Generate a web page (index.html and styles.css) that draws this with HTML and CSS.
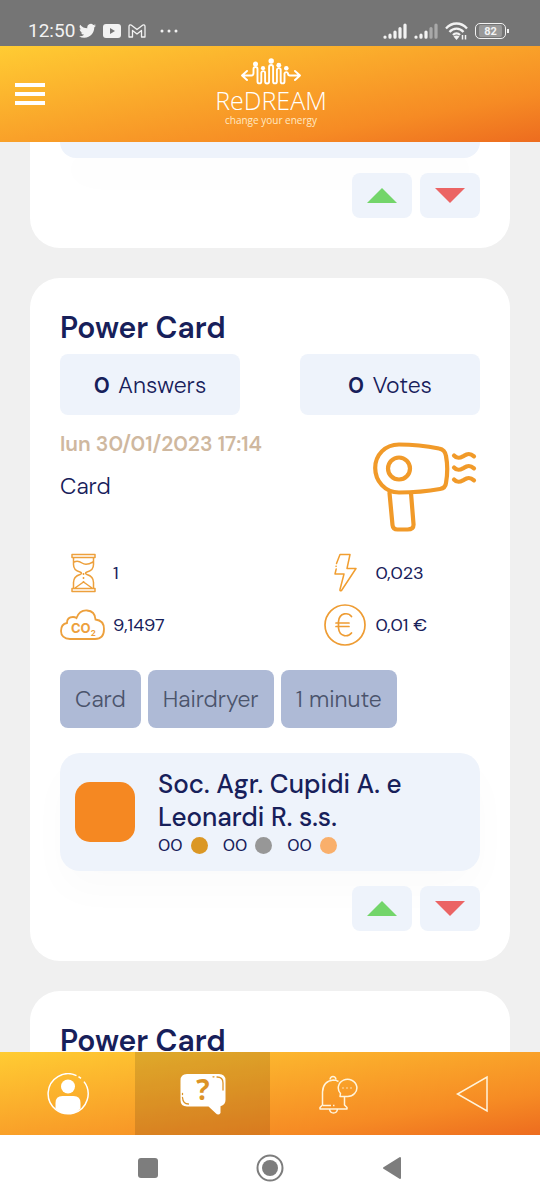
FILE: index.html
```html
<!DOCTYPE html>
<html lang="en">
<head>
<meta charset="utf-8">
<meta name="viewport" content="width=device-width, initial-scale=1">
<title>ReDREAM</title>
<link rel="stylesheet" href="styles.css">
</head>
<body>
<div class="screen">
  <div class="status">
    <span class="clock">12:50</span>
    <svg width="17" height="16" viewBox="0 0 24 20" fill="#f2f2f2"><path d="M24 2.4a10 10 0 0 1-2.8.8A5 5 0 0 0 23.300.5a10 10 0 0 1-3.100 1.200A4.900 4.900 0 0 0 11.800 6.200 14 14 0 0 1 1.700 1a4.900 4.900 0 0 0 1.500 6.600A4.900 4.900 0 0 1 1 7v.1a4.900 4.900 0 0 0 4 4.800 5 5 0 0 1-2.300.1 4.900 4.900 0 0 0 4.600 3.400A9.900 9.900 0 0 1 0 17.500 14 14 0 0 0 7.500 19.700c9.100 0 14.300-7.700 14-14.700A10 10 0 0 0 24 2.400z"/></svg>
    <svg width="18" height="14" viewBox="0 0 18 14"><rect width="18" height="14" rx="3" fill="#f2f2f2"/><path d="M7 4l5 3-5 3z" fill="#757575"/></svg>
    <svg width="18" height="14" viewBox="0 0 18 14" fill="none" stroke="#f2f2f2" stroke-width="1.300" stroke-linejoin="round"><path d="M1 13V2.500C1 .8 2.700.5 3.800 1.400L9 5.500l5.200-4.100C15.300.5 17 .8 17 2.500V13h-3.500V6.500L9 10 4.500 6.500V13z"/></svg>
    <svg class="more" width="18" height="4" viewBox="0 0 18 4" fill="#f2f2f2"><circle cx="2" cy="2" r="1.500"/><circle cx="9" cy="2" r="1.500"/><circle cx="16" cy="2" r="1.500"/></svg>
    <span class="spacer"></span>
    <svg width="24" height="16" viewBox="0 0 24 16" stroke="#f2f2f2" stroke-width="3.200" stroke-linecap="round"><path d="M2 14.200v-.2M7 14.200v-2M12 14.200V9M17 14.200V5.500M22 14.200V2"/></svg>
    <svg width="24" height="16" viewBox="0 0 24 16" stroke="#f2f2f2" stroke-width="3.200" stroke-linecap="round"><path d="M2 14.200v-.2M7 14.200v-2M12 14.200V9"/><path d="M17 14.200V5.500M22 14.200V2" stroke="#a9a9a9"/></svg>
    <svg width="23" height="18" viewBox="0 0 23 18" fill="none" stroke="#f2f2f2" stroke-width="2.300"><path d="M1 6.500C7-.2 16-.2 22 6.500M4.500 10C8.500 5.500 14.500 5.500 18.500 10M8 13c2-2.300 5-2.300 7 0"/><path d="M8.500 14.500L11.500 18l3-3.500c-1.500-1.500-4.500-1.500-6 0z" fill="#f2f2f2" stroke="none"/><path d="M17.500 17.500v-4.500M20.500 13v4.500" stroke-width="1.500"/></svg>
    <span class="battery">82</span>
  </div>

  <header class="topbar">
    <button class="menu" aria-label="Menu"><span></span><span></span><span></span></button>
    <div class="brand">
      <svg width="60" height="27" viewBox="0 0 60 27" fill="none" stroke="#fff" stroke-width="1.900" stroke-linecap="round" stroke-linejoin="round">
        <path d="M6 13L1 17.500 6 22M1 17.500H10.500Q12.500 17.500 12.500 15V11a2 2 0 0 1 4 0V23.500a1.900 1.900 0 0 0 3.800 0V15a1.900 1.900 0 0 1 3.800 0V23.500a2 2 0 0 0 4 0V9a2 2 0 0 1 4 0V23.500a1.900 1.900 0 0 0 3.800 0V12a1.900 1.900 0 0 1 3.800 0V23.500a1.900 1.900 0 0 0 3.800 0V15.500a1.800 1.800 0 0 1 3.500 0Q47 17.500 49 17.500H59M54 13l5 4.500L54 22"/>
        <g fill="#fff" stroke="none"><circle cx="14.500" cy="6" r="2.500"/><circle cx="22" cy="10.200" r="2.100"/><circle cx="30.200" cy="3" r="2.700"/><circle cx="37.800" cy="7.200" r="2.400"/><circle cx="45.300" cy="10.300" r="2.300"/></g>
      </svg>
      <span class="name">ReDREAM</span>
      <span class="tagline">change your energy</span>
    </div>
  </header>

  <main class="feed">
    <article class="card card-scrolled">
      <div class="profile-end"></div>
      <div class="ballot">
        <button class="vote" aria-label="Vote up"><svg width="30" height="15" viewBox="0 0 30 15"><path d="M0 15L15 0l15 15z" fill="#73d56a"/></svg></button>
        <button class="vote" aria-label="Vote down"><svg width="30" height="15" viewBox="0 0 30 15"><path d="M0 0h30L15 15z" fill="#eb6464"/></svg></button>
      </div>
    </article>

    <article class="card">
      <h2 class="title">Power Card</h2>
      <div class="counts">
        <button class="count"><b>0</b> Answers</button>
        <button class="count"><b>0</b> Votes</button>
      </div>
      <div class="summary">
        <div>
          <time class="date">lun 30/01/2023 17:14</time>
          <p class="kind">Card</p>
        </div>
        <svg class="dryer" width="104" height="90" viewBox="0 0 104 90" fill="none" stroke="#f19a29" stroke-width="4.200" stroke-linecap="round" stroke-linejoin="round">
          <path d="M26 2.500C12 2.500 2.200 13 2.200 26S12 50.500 26 50.500Q48 50.500 67 47Q72.500 46 73 41Q75.500 27 73 14Q72 7.500 66 6.500Q46 2.500 26 2.500z"/>
          <circle cx="26" cy="26.500" r="11"/>
          <path d="M16.500 51l3 32q.5 4.500 5 4.500h10q6.500 0 6-5.500L38 51"/>
          <path d="M81 13.500c4 4.500 7.500 1.500 10 .3 3.500-2.500 6-3 10 .5M81 25.500c4 4.500 7.500 1.500 10 .3 3.500-2.500 6-3 10 .5M81 37.500c4 4.500 7.500 1.500 10 .3 3.500-2.500 6-3 10 .5"/>
        </svg>
      </div>

      <div class="stats">
        <div class="stat">
          <svg width="45" height="42" viewBox="0 0 45 42" fill="none" stroke="#eda03c" stroke-width="1.500" stroke-linejoin="round">
            <path d="M12 2.500h23v3H12zM12 36.500h23v3H12zM13.500 5.500v7q0 6 6.500 7.500 3 1 0 2.500-6.500 2-6.500 8v6M33.500 5.500v7q0 6-6.500 7.500-3 1 0 2.500 6.500 2 6.500 8v6M14 10q4-2 8 1t11-1M15 36l8.500-6 8.500 6"/><path d="M23.500 21v9" stroke-dasharray="2 2"/>
          </svg><span>1</span>
        </div>
        <div class="stat">
          <svg width="45" height="42" viewBox="0 0 45 42" fill="none" stroke="#f19e30" stroke-width="1.500" stroke-linejoin="round" stroke-linecap="round">
            <path d="M13.500 11.500L17 2.500h10l-3 14h9L18.500 38.500q-2 1-1.500-1L21 22H12l1.200-5"/><path d="M13 14.200h.2"/>
          </svg><span>0,023</span>
        </div>
        <div class="stat">
          <svg width="45" height="42" viewBox="0 0 45 42" fill="none" stroke="#eda03c" stroke-width="1.800">
            <path d="M10 35C4 35 1 31.500 1 27q0-7 6-8 0-6 6-6 2 0 3.500 1 3-8 10.500-7.500 8 .5 8.500 9 8.500 1 8.500 9.500 0 10-9 10z"/>
            <text class="co" x="11" y="29">CO<tspan class="co-sub" dy="3">2</tspan></text>
          </svg><span>9,1497</span>
        </div>
        <div class="stat">
          <svg width="45" height="42" viewBox="0 0 45 42" fill="none" stroke="#ee9c33" stroke-width="1.700">
            <circle cx="22" cy="21" r="20"/><path d="M28.500 12.500C25.500 8.500 16.500 8 15.500 17.500v6.500c1 9.500 10 9 13 5M13 19h13M13 22.500h13" stroke-linecap="round"/>
          </svg><span>0,01 €</span>
        </div>
      </div>

      <div class="tags">
        <button class="tag">Card</button>
        <button class="tag">Hairdryer</button>
        <button class="tag">1 minute</button>
      </div>

      <section class="profile">
        <div class="avatar"></div>
        <div class="who">
          <h3 class="owner">Soc. Agr. Cupidi A. e Leonardi R. s.s.</h3>
          <div class="medals">
            <span class="medal gold">00</span>
            <span class="medal silver">00</span>
            <span class="medal bronze">00</span>
          </div>
        </div>
      </section>

      <div class="ballot">
        <button class="vote" aria-label="Vote up"><svg width="30" height="15" viewBox="0 0 30 15"><path d="M0 15L15 0l15 15z" fill="#73d56a"/></svg></button>
        <button class="vote" aria-label="Vote down"><svg width="30" height="15" viewBox="0 0 30 15"><path d="M0 0h30L15 15z" fill="#eb6464"/></svg></button>
      </div>
    </article>

    <article class="card">
      <h2 class="title">Power Card</h2>
    </article>
  </main>

  <nav class="tabs">
    <button class="tab" aria-label="Profile">
      <svg width="42" height="42" viewBox="0 0 42 42" fill="#fff"><path d="M29.500 2.600A20 20 0 1 0 37 8.600M31.500 3.600l2.500 1.800" fill="none" stroke="#fff" stroke-width="1.500"/><circle cx="21" cy="13.500" r="7"/><path d="M8.500 35.500V30q0-7 7-7h11q7 0 7 7v5.500Q28 41 21 41T8.500 35.500z"/></svg>
    </button>
    <button class="tab active" aria-label="Questions">
      <svg width="46" height="42" viewBox="0 0 46 42"><path d="M7 1h32q6.500 0 6.500 6.500V27q0 5-5 6.200V40q-2 3-5 0l-7-6.500H7Q.5 33.500.5 27V7.500Q.5 1 7 1z" fill="#fff"/><g fill="none" stroke="#dc9327" stroke-width="1.300" stroke-linecap="round"><path d="M37 4q6 0 6 6v7M33 3.800h1M2.500 24.500q.5 6.500 6 6.500M2.500 20.500v1"/></g><text class="mark" x="23" y="27">?</text></svg>
    </button>
    <button class="tab" aria-label="Notifications">
      <svg width="40" height="40" viewBox="0 0 40 40" fill="none" stroke="#fff4dc" stroke-width="1.500" stroke-linejoin="round"><path d="M20.500 7.500Q18 6 15.500 6 5 7 4.500 18v13L2 33.500V35h27v-1.500L26.500 31v-8M12 5.500q.5-3 3-3t3 3M11.500 35q.5 4 4 4t4-4M5 31.500h8M15 31.500h1.500"/><path d="M22.500 19.500A9.300 8.600 0 1 1 29 22.500H22z"/><path d="M24.500 14h1M28.500 14h1M32.500 14h1" stroke-width="1.500"/></svg>
    </button>
    <button class="tab" aria-label="Back">
      <svg width="36" height="38" viewBox="0 0 36 38" fill="none" stroke="#fff4dc" stroke-width="1.500"><path d="M32 2v34L2.500 19z"/></svg>
    </button>
  </nav>

  <div class="sysnav">
    <button class="key" aria-label="Recent apps"><svg width="20" height="20" viewBox="0 0 20 20"><rect width="20" height="20" rx="3" fill="#7d7d7d"/></svg></button>
    <button class="key" aria-label="Home"><svg width="28" height="28" viewBox="0 0 28 28"><circle cx="14" cy="14" r="12.500" fill="none" stroke="#7d7d7d" stroke-width="2"/><circle cx="14" cy="14" r="8" fill="#7d7d7d"/></svg></button>
    <button class="key" aria-label="System back"><svg width="20" height="24" viewBox="0 0 20 24"><path d="M18 2v20L2 12z" fill="#7d7d7d" stroke="#7d7d7d" stroke-width="2" stroke-linejoin="round"/></svg></button>
  </div>
</div>
</body>
</html>
```
FILE: styles.css
```css
* { box-sizing: border-box; }
body, h2, h3, p { margin: 0; }
body {
  font-family: "DM Sans", Inter, sans-serif;
  color: #17205a;
  background: #f0f0f0;
}
button {
  border: 0;
  padding: 0;
  background: none;
  font: inherit;
  color: inherit;
}
svg { display: block; flex: none; }

.screen {
  display: flex;
  flex-direction: column;
  height: 100vh;
}

.status {
  display: flex;
  align-items: center;
  gap: 7px;
  height: 46px;
  padding: 15px 34px 0 28px;
  background: #757575;
  color: #f2f2f2;
  flex: none;
}
.clock { font: 400 19px Roboto, sans-serif; margin-right: -3px; }
.more { margin-left: 7px; }
.spacer { flex: 1; }
.battery {
  position: relative;
  width: 31px;
  height: 16px;
  border: 1px solid #f2f2f2;
  border-radius: 5px;
  padding: 1px 3px;
  font: 700 11px/13px Roboto, sans-serif;
  text-align: center;
  background: #999 content-box;
}
.battery::after {
  content: "";
  position: absolute;
  right: -4px;
  top: 5px;
  width: 2px;
  height: 4px;
  background: #f2f2f2;
}

.topbar, .tabs { background: linear-gradient(to bottom right, #ffcc33, #f68b24 75%, #ed6c1f); }
.topbar {
  display: grid;
  grid-template-columns: 1fr auto 1fr;
  align-items: center;
  height: 96px;
  padding: 0 13px 0 15px;
  flex: none;
}
.menu {
  display: grid;
  gap: 5px;
  width: 30px;
}
.menu span { height: 4px; background: #fff; }
.brand {
  display: flex;
  flex-direction: column;
  align-items: center;
  color: #fff;
  padding-bottom: 6px;
}
.name { font: 300 25px/30px "Open Sans", sans-serif; }
.tagline { font: 400 10px/10px "Open Sans", sans-serif; color: #ffe9c4; }

.feed {
  flex: 1;
  min-height: 0;
  overflow: hidden;
  padding: 0 30px;
  display: flex;
  flex-direction: column;
  gap: 30px;
}
.card {
  flex: none;
  padding: 30px;
  border-radius: 30px;
  background: #fff;
}
.card-scrolled { padding-top: 0; border-radius: 0 0 30px 30px; }
.profile-end {
  height: 16px;
  border-radius: 0 0 20px 20px;
  background: #eef3fb;
  box-shadow: 0 20px 40px rgba(0, 0, 0, .02);
}
.title { font-size: 30px; line-height: 40px; font-weight: 600; }
.counts {
  display: flex;
  justify-content: space-between;
  gap: 60px;
  margin-top: 6px;
}
.count {
  flex: 1;
  height: 61px;
  border-radius: 8px;
  background: #eef3fb;
  font-size: 23px;
  font-weight: 300;
}
.count b { font-weight: 600; margin-right: 2px; }
.summary {
  display: flex;
  justify-content: space-between;
  padding: 14px 3px 0 0;
}
.date {
  display: block;
  font-size: 21px;
  line-height: 30px;
  font-weight: 600;
  color: #cfb89f;
}
.kind { font-size: 23px; line-height: 30px; font-weight: 300; margin-top: 12px; }
.dryer { margin-top: 13px; }

.stats {
  display: grid;
  grid-template-columns: 5fr 3fr;
  row-gap: 10px;
  margin-top: 20px;
}
.stat {
  display: flex;
  align-items: center;
  gap: 8px;
  font-size: 18px;
}
.co { font: 700 13px Inter, sans-serif; fill: #eda03c; stroke: none; }
.co-sub { font-size: 8px; }

.tags { display: flex; gap: 7px; margin-top: 24px; }
.tag {
  height: 58px;
  padding: 0 15px;
  border-radius: 8px;
  background: #aebad6;
  color: #4b546c;
  font-size: 23px;
  font-weight: 300;
}

.profile {
  display: flex;
  align-items: center;
  gap: 23px;
  margin-top: 25px;
  padding: 15px;
  border-radius: 20px;
  background: #eef3fb;
  box-shadow: 0 20px 40px rgba(0, 0, 0, .02);
}
.avatar {
  flex: none;
  width: 60px;
  height: 60px;
  border-radius: 15px;
  background: #f58822;
}
.who { flex: 1; padding-right: 40px; }
.owner {
  font-size: 26px;
  line-height: 33px;
  font-weight: 500;
}
.medals { display: flex; gap: 15px; }
.medal {
  display: flex;
  align-items: center;
  gap: 8px;
  font-size: 18px;
  line-height: 22px;
}
.medal::after {
  content: "";
  width: 17px;
  height: 17px;
  border-radius: 50%;
  background: currentColor;
}
.gold::after { background: #db9724; }
.silver::after { background: #979797; }
.bronze::after { background: #f9af6b; }

.ballot {
  display: flex;
  justify-content: flex-end;
  gap: 8px;
  margin-top: 15px;
}
.vote {
  display: grid;
  place-items: center;
  width: 60px;
  height: 45px;
  border-radius: 8px;
  background: #eef3fb;
}

.tabs {
  display: grid;
  grid-template-columns: repeat(4, 1fr);
  height: 83px;
  flex: none;
}
.tab { display: grid; place-items: center; }
.tab.active { background: rgba(0, 0, 0, .12); }
.mark { font: 700 28px "Open Sans", sans-serif; fill: #dc9327; text-anchor: middle; }

.sysnav {
  display: flex;
  justify-content: center;
  align-items: center;
  gap: 94px;
  height: 65px;
  background: #fff;
  flex: none;
}
.key { width: 28px; display: grid; place-items: center; }
```
